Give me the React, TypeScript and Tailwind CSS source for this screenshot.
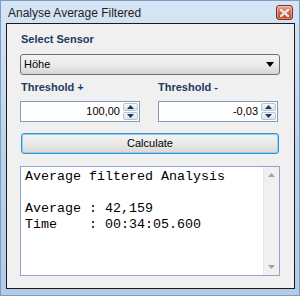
import React from "react";

const sans = { fontFamily: '"Liberation Sans", Arial, sans-serif' };
const mono = { fontFamily: '"Liberation Mono", "Courier New", monospace' };

function Spinner() {
  return (
    <div className="flex flex-col w-[15px] h-full gap-px">
      <div className="flex-1 flex items-center justify-center rounded-[2px] border border-[#b6c4d6] bg-gradient-to-b from-[#f4f7fb] to-[#dbe3ee]">
        <svg width="7" height="4" viewBox="0 0 7 4">
          <path d="M0 4 L3.5 0 L7 4 Z" fill="#1f3559" />
        </svg>
      </div>
      <div className="flex-1 flex items-center justify-center rounded-[2px] border border-[#b6c4d6] bg-gradient-to-b from-[#f4f7fb] to-[#dbe3ee]">
        <svg width="7" height="4" viewBox="0 0 7 4">
          <path d="M0 0 L7 0 L3.5 4 Z" fill="#1f3559" />
        </svg>
      </div>
    </div>
  );
}

function Numeric({ value, className }: { value: string; className?: string }) {
  return (
    <div className={"flex items-stretch h-[21px] w-[120px] border border-[#7f9db9] bg-white p-px " + (className ?? "")}>
      <div className="flex-1 flex items-center justify-end pr-[3px] text-[11px] text-black" style={sans}>
        {value}
      </div>
      <Spinner />
    </div>
  );
}

export default function App() {
  return (
    <div className="w-[300px] h-[296px] overflow-hidden" style={sans}>
      <div className="w-full h-full flex flex-col border border-[#7d9cc2] bg-gradient-to-b from-[#d6e5f5] via-[#bcd3ec] to-[#b3cbe6]">
        {/* Title bar */}
        <div className="h-[22px] flex items-start justify-between pl-[7px] pr-[6px]">
          <div className="mt-[5px] text-[12px] leading-[14px] text-[#1e1e1e]" style={sans}>
            Analyse Average Filtered
          </div>
          <div className="mt-[4px] w-[17px] h-[15px] rounded-[3px] border border-[#7a3226] bg-gradient-to-b from-[#eba796] via-[#d4664c] to-[#c5452b] flex items-center justify-center shadow-[inset_0_0_0_1px_rgba(255,255,255,0.35)]">
            <svg width="9" height="8" viewBox="0 0 9 8">
              <path d="M1 1 L8 7 M8 1 L1 7" stroke="#ffffff" strokeWidth="2.2" strokeLinecap="square" />
              <path d="M1 1 L8 7 M8 1 L1 7" stroke="#5a5a5a" strokeWidth="0.6" opacity="0.4" />
            </svg>
          </div>
        </div>
        {/* Client */}
        <div className="ml-[5px] mr-[4px] mb-[6px] flex-1 border border-[#1b1b1b] bg-[#f0f0f0] flex flex-col pl-[13px] pt-[8px]">
          <div className="h-[14px] leading-[14px] text-[11px] font-bold text-[#1e3a62] pl-px">Select Sensor</div>
          <div className="mt-[8px] w-[260px] h-[21px] rounded-[3px] border border-[#707070] bg-gradient-to-b from-[#f2f2f2] via-[#ebebeb] to-[#d6d6d6] flex items-center justify-between pl-[3px] pr-[5px]">
            <span className="text-[11px] text-black">Höhe</span>
            <svg width="8" height="5" viewBox="0 0 8 5">
              <path d="M0 0 L8 0 L4 5 Z" fill="#000000" />
            </svg>
          </div>
          <div className="mt-[5px] flex w-[260px]">
            <div className="w-[138px] h-[14px] leading-[14px] text-[11px] font-bold text-[#1e3a62] pl-px">Threshold +</div>
            <div className="h-[14px] leading-[14px] text-[11px] font-bold text-[#1e3a62]">Threshold -</div>
          </div>
          <div className="mt-[7px] flex w-[260px]">
            <Numeric value="100,00" />
            <Numeric value="-0,03" className="ml-[18px]" />
          </div>
          <div className="mt-[11px] ml-px w-[258px] h-[21px] rounded-[3px] border border-[#3c8fc8] bg-gradient-to-b from-[#f4f4f4] via-[#e9e9e9] to-[#d8d8d8] shadow-[inset_0_0_0_1px_#8fd0f3] flex items-center justify-center">
            <span className="text-[11px] text-black">Calculate</span>
          </div>
          <div className="mt-[12px] w-[260px] h-[110px] border border-[#8ea5c4] bg-white flex">
            <div className="flex-1 pl-[4px] pt-[2px] text-[13.33px] leading-[16px] text-black whitespace-pre" style={mono}>
              {"Average filtered Analysis\n\nAverage : 42,159\nTime    : 00:34:05.600"}
            </div>
            <div className="w-[16px] bg-[#f0f0f0] border-l border-[#e6e6e6] flex flex-col justify-between items-center py-[6px]">
              <svg width="7" height="4" viewBox="0 0 7 4">
                <path d="M0 4 L3.5 0 L7 4 Z" fill="#a3a3a3" />
              </svg>
              <svg width="7" height="4" viewBox="0 0 7 4">
                <path d="M0 0 L7 0 L3.5 4 Z" fill="#a3a3a3" />
              </svg>
            </div>
          </div>
        </div>
      </div>
    </div>
  );
}
